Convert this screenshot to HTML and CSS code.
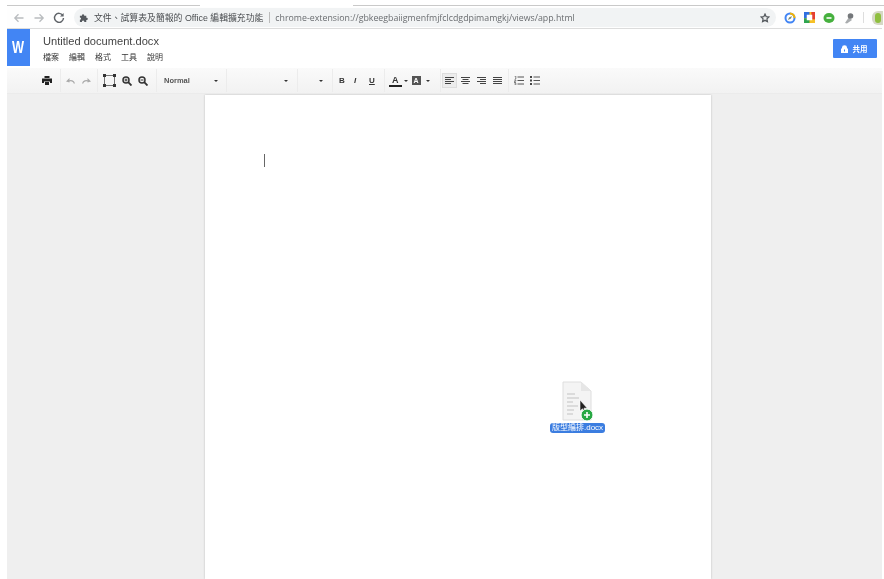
FILE: index.html
```html
<!DOCTYPE html>
<html lang="zh-Hant">
<head>
<meta charset="utf-8">
<title>Untitled document.docx</title>
<link rel="stylesheet" href="styles.css">
</head>
<body>
<div class="window">
  <div class="tabstrip"><span class="tabline tabline-a"></span><span class="tabgap"></span><span class="tabline tabline-b"></span></div>
  <div class="browserbar">
    <svg class="nav" width="12" height="12" viewBox="0 0 12 12"><path d="M10.500 6H2M5.500 2.200 1.800 6l3.700 3.800" fill="none" stroke="#b9bcbf" stroke-width="1.300"/></svg>
    <svg class="nav" width="12" height="12" viewBox="0 0 12 12"><path d="M1.500 6H10M6.500 2.200 10.200 6l-3.700 3.800" fill="none" stroke="#b9bcbf" stroke-width="1.300"/></svg>
    <svg class="nav" width="12" height="12" viewBox="0 0 12 12"><path d="M9.800 3.400A4.500 4.500 0 1 0 10.500 6" fill="none" stroke="#5f6368" stroke-width="1.400"/><path d="M10.600 1v3.600H7z" fill="#5f6368"/></svg>
    <div class="omnibox">
      <svg class="puzzle" width="10" height="10" viewBox="0 0 11 11"><path d="M1 5V3h2.200a1.300 1.300 0 1 1 2.500 0H8v2.200a1.300 1.300 0 1 1 0 2.500V10H5.800a1.300 1.300 0 1 0-2.500 0H1V7.500a1.200 1.200 0 1 0 0-2.500z" fill="#55595e"/></svg>
      <span class="ext-name">文件、試算表及簡報的 Office 編輯擴充功能</span>
      <span class="divider"></span>
      <span class="url">chrome-extension://gbkeegbaiigmenfmjfclcdgdpimamgkj/views/app.html</span>
      <svg class="star" width="10" height="10" viewBox="0 0 12 12"><path d="m6 1.300 1.400 3.100 3.300.4-2.400 2.300.6 3.300L6 8.800l-2.900 1.600.6-3.300-2.400-2.300 3.300-.4z" fill="none" stroke="#55595e" stroke-width="1.500"/></svg>
    </div>
    <div class="extensions">
      <svg width="12" height="12" viewBox="0 0 12 12"><circle cx="6" cy="6" r="4.500" fill="none" stroke="#4285f4" stroke-width="2"/><path d="M6 1.500A4.500 4.500 0 0 1 10.500 6" fill="none" stroke="#f5b400" stroke-width="2"/><path d="M8 4 5 5.500 4 8l3-1.500z" fill="#7a8a70"/></svg>
      <svg width="11" height="11" viewBox="0 0 12 12"><rect width="12" height="12" fill="#f6c026"/><rect width="6" height="7" fill="#2f6fe0"/><rect y="7" width="6" height="5" fill="#2ea44f"/><rect x="8" width="4" height="8" fill="#e53f30"/><rect x="3" y="3" width="6" height="6" fill="#fff"/></svg>
      <svg width="12" height="12" viewBox="0 0 12 12"><ellipse cx="6" cy="6" rx="5.500" ry="5" fill="#46b03e"/><rect x="3.500" y="5" width="5" height="2" fill="#d9f0d5"/></svg>
      <svg width="12" height="12" viewBox="0 0 12 12"><path d="M2 11 6 5l3 3-5 3.500z" fill="#a9acae"/><circle cx="7.500" cy="4" r="2.800" fill="#74777a"/></svg>
      <span class="ext-sep"></span>
      <span class="avatar"><span class="avatar-in"></span></span>
    </div>
  </div>
  <header class="appbar">
    <div class="logo"><span class="logo-w">W</span></div>
    <div class="titles">
      <div class="doc-title">Untitled document.docx</div>
      <nav class="menu"><span>檔案</span><span>編輯</span><span>格式</span><span>工具</span><span>說明</span></nav>
    </div>
    <button class="share"><svg width="7" height="8" viewBox="0 0 7 8"><path d="M1 3.500V2.400a2.500 2.200 0 0 1 5 0v1.100h1V8H0V3.500z" fill="#fff"/><rect x="3" y="4.500" width="1" height="2" fill="#4285f4"/></svg><span>共用</span></button>
  </header>
  <div class="toolbar">
    <div class="tgroup g-print">
      <svg width="10" height="9" viewBox="0 0 10 9"><path d="M2.500 0h5v2h-5zM0 2.500h10V7H8V5.500H2V7H0zM3 6h4v3H3z" fill="#222"/></svg>
    </div>
    <div class="tgroup g-undo">
      <svg width="9" height="6" viewBox="0 0 9 6"><path d="M8.500 5.500C7.500 2.800 5 2 2.500 3" fill="none" stroke="#aaa" stroke-width="1.200"/><path d="M0 3.500 3.500 0v4.500z" fill="#aaa"/></svg>
      <svg width="9" height="6" viewBox="0 0 9 6"><path d="M.5 5.500C1.500 2.800 4 2 6.500 3" fill="none" stroke="#aaa" stroke-width="1.200"/><path d="M9 3.500 5.500 0v4.500z" fill="#aaa"/></svg>
    </div>
    <div class="tgroup g-zoom">
      <svg width="13" height="13" viewBox="0 0 13 13"><path d="M2 1.500h9M2 11.500h9M1.500 2v9M11.500 2v9" stroke="#555" stroke-width=".8" fill="none"/><path d="M0 0h3v3H0zM10 0h3v3h-3zM0 10h3v3H0zM10 10h3v3h-3z" fill="#333"/></svg>
      <svg width="10" height="10" viewBox="0 0 10 10"><circle cx="4" cy="4" r="3" fill="none" stroke="#333" stroke-width="1.500"/><path d="m6.200 6.200 3.300 3.300" stroke="#333" stroke-width="1.800"/><path d="M2.500 4h3M4 2.500v3" stroke="#333"/></svg>
      <svg width="10" height="10" viewBox="0 0 10 10"><circle cx="4" cy="4" r="3" fill="none" stroke="#333" stroke-width="1.500"/><path d="m6.200 6.200 3.300 3.300" stroke="#333" stroke-width="1.800"/><path d="M2.500 4h3" stroke="#333"/></svg>
    </div>
    <div class="tselect s-style"><span>Normal</span><i class="caret"></i></div>
    <div class="tselect s-font"><i class="caret"></i></div>
    <div class="tselect s-size"><i class="caret"></i></div>
    <div class="tgroup g-format"><b class="f-b">B</b><i class="f-i">I</i><u class="f-u">U</u></div>
    <div class="tgroup g-color">
      <span class="color-a">A</span><i class="caret"></i>
      <span class="color-b">A</span><i class="caret"></i>
    </div>
    <div class="tgroup g-align">
      <span class="al al-on"><svg width="9" height="8" viewBox="0 0 9 8"><path d="M0 .5h9M0 2.500h6M0 4.500h9M0 6.500h6" stroke="#444"/></svg></span>
      <span class="al"><svg width="9" height="8" viewBox="0 0 9 8"><path d="M0 .5h9M1.500 2.500h6M0 4.500h9M1.500 6.500h6" stroke="#444"/></svg></span>
      <span class="al"><svg width="9" height="8" viewBox="0 0 9 8"><path d="M0 .5h9M3 2.500h6M0 4.500h9M3 6.500h6" stroke="#444"/></svg></span>
      <span class="al"><svg width="9" height="8" viewBox="0 0 9 8"><path d="M0 .5h9M0 2.500h9M0 4.500h9M0 6.500h9" stroke="#444"/></svg></span>
    </div>
    <div class="tgroup g-list">
      <svg width="10" height="9" viewBox="0 0 10 9"><path d="M3.500 1h6.500M3.500 4.500h6.500M3.500 8h6.500" stroke="#555"/><path d="M.5 0h1.300v3H1M.3 4h1.500v1.200H.3v1.300h1.600M.3 7h1.500v2H.3" stroke="#555" fill="none" stroke-width=".7"/></svg>
      <svg width="10" height="9" viewBox="0 0 10 9"><path d="M3.500 1h6.500M3.500 4.500h6.500M3.500 8h6.500" stroke="#555"/><path d="M0 0h2v2H0zM0 3.500h2v2H0zM0 7h2v2H0z" fill="#444"/></svg>
    </div>
  </div>
  <main class="workspace">
    <div class="page">
      <span class="cursor"></span>
      <div class="drag">
        <svg class="drag-file" width="40" height="46" viewBox="0 0 40 46">
          <path d="M5 3h18l10 9v29H5z" fill="#f4f4f4" stroke="#dedede"/>
          <path d="M23 3v9h10z" fill="#e6e6e6"/>
          <path d="M9 15h8M9 19h12M9 23h6M9 27h11M9 31h7M9 35h6" stroke="#c2c2c2"/>
          <path d="M22 21v11l2.500-2.200 1.800 3.700 1.500-.8-1.800-3.500h3.300z" fill="#222" stroke="#fff" stroke-width=".6"/>
          <circle cx="29" cy="36" r="6" fill="#27a844" stroke="#fff"/>
          <path d="M26 36h6M29 33v6" stroke="#fff" stroke-width="1.600"/>
        </svg>
        <span class="drag-label">版型編排.docx</span>
      </div>
    </div>
  </main>
</div>
</body>
</html>
```

FILE: styles.css
```css
* { box-sizing: border-box; }
html, body { margin: 0; height: 100%; }
body {
  background: #fff;
  overflow: hidden;
  font-family: "Liberation Sans", "Noto Sans CJK TC", sans-serif;
  color: #333;
}
.window {
  width: 875px;
  height: 579px;
  margin-left: 7px;
  display: flex;
  flex-direction: column;
  background: #fff;
}
svg { display: block; flex: none; }

.tabstrip { height: 7px; display: flex; padding-top: 5px; flex: none; }
.tabline { height: 1px; background: #c9c9c9; }
.tabline-a { width: 193px; }
.tabgap { width: 153px; }
.tabline-b { flex: 1; margin-right: -2px; }

.browserbar {
  height: 22px;
  flex: none;
  display: flex;
  align-items: center;
  border-bottom: 1px solid #dcdcdc;
  padding-left: 6px;
  gap: 7px;
  background: #fefefe;
  filter: blur(.5px);
}
.nav { flex: none; margin-right: 1px; }
.omnibox {
  margin-left: 1px;
  width: 702px;
  height: 19px;
  flex: none;
  border-radius: 10px;
  background: #f1f3f4;
  display: flex;
  align-items: center;
  padding-left: 5px;
  color: #55595e;
  font-size: 8.850px;
}
.puzzle { margin-right: 5px; }
.ext-name { white-space: nowrap; color: #4a4d50; }
.divider { width: 1px; height: 11px; background: #bbb; margin: 0 5px 0 6px; }
.url { font-family: "Open Sans", sans-serif; font-size: 8.800px; color: #6a6d70; white-space: nowrap; }
.star { margin-left: auto; margin-right: 6px; }
.extensions { display: flex; align-items: center; gap: 8px; margin-left: 1px; }
.ext-sep { width: 1px; height: 11px; background: #ddd; }
.avatar { width: 11px; height: 14px; border-radius: 6px 0 0 6px; background: #d6d8c6; display: block; padding: 2px 0 0 3px; }
.avatar-in { display: block; width: 6px; height: 10px; border-radius: 3px; background: #8fbf3f; }

.appbar { height: 39px; flex: none; display: flex; background: #fff; }
.logo {
  width: 23px;
  height: 37px;
  background: #4285f4;
  color: #fff;
  font-weight: 700;
  font-size: 17px;
  line-height: 37px;
  text-align: center;
  filter: blur(.5px);
}
.logo-w { display: inline-block; transform: scaleX(.75); }
.titles { margin-left: 13px; padding-top: 5px; filter: blur(.45px); }
.doc-title { font-size: 11.100px; line-height: 15px; color: #444; }
.menu { display: flex; gap: 10px; font-size: 8px; line-height: 11px; margin-top: 3px; color: #333; }
.share {
  margin: 10px 5px 0 auto;
  width: 44px;
  height: 19px;
  border: 0;
  border-radius: 1px;
  background: #4285f4;
  color: #fff;
  font: 700 7.500px "Noto Sans CJK TC", sans-serif;
  display: flex;
  align-items: center;
  justify-content: center;
  gap: 5px;
  padding: 0 2px 0 0;
  filter: blur(.5px);
}

.toolbar {
  height: 26px;
  flex: none;
  display: flex;
  align-items: center;
  background: linear-gradient(#fafafa, #f2f2f2);
  padding-left: 30px;
  border-bottom: 1px solid #ebebeb;
}
.tgroup { height: 23px; display: flex; align-items: center; border-right: 1px solid #ececec; filter: blur(.4px); }
.tselect { height: 23px; display: flex; align-items: center; border-right: 1px solid #ececec; font-size: 7.500px; font-weight: 700; color: #555; justify-content: space-between; filter: blur(.4px); }
.caret { display: block; width: 0; height: 0; border: 2px solid transparent; border-top: 2.500px solid #333; border-bottom: 0; flex: none; }
.g-print { width: 24px; padding-left: 5px; }
.g-undo { width: 37px; padding-left: 5px; gap: 7px; }
.g-zoom { width: 59px; padding-left: 5px; gap: 6px; }
.s-style { width: 70px; padding: 0 8px 0 7px; }
.s-font { width: 71px; justify-content: flex-end; padding-right: 9px; }
.s-size { width: 35px; justify-content: flex-end; padding-right: 9px; }
.g-format { width: 52px; padding-left: 6px; font-size: 8px; color: #333; }
.f-b { font-weight: 700; width: 15px; }
.f-i { font-style: italic; font-weight: 700; width: 15px; }
.f-u { font-weight: 700; }
.g-color { width: 56px; padding-left: 4px; gap: 2px; }
.color-a { font-size: 9px; line-height: 10px; font-weight: 700; border-bottom: 2px solid #222; padding: 0 3px; }
.color-b { margin-left: 2px; width: 9px; height: 9px; background: #555; color: #fff; font-size: 7px; line-height: 9px; text-align: center; font-weight: 700; }
.g-color .caret:last-child { margin-left: 3px; }
.g-align { width: 68px; padding-left: 1px; gap: 1px; }
.al { width: 15px; height: 15px; display: flex; align-items: center; justify-content: center; }
.al-on { background: #ececec; border: 1px solid #ddd; }
.g-list { border: 0; padding-left: 5px; gap: 6px; }

.workspace {
  flex: 1;
  min-height: 0;
  background: #efefef;
  display: flex;
  padding: 1px 0 0 198px;
  overflow: hidden;
}
.page {
  position: relative;
  width: 506px;
  background: #fff;
  box-shadow: 0 0 2px #bbb;
}
.cursor { position: absolute; left: 59px; top: 59px; width: 1px; height: 13px; background: #666; filter: blur(.3px); }
.drag { position: absolute; left: 345px; top: 284px; display: flex; flex-direction: column; align-items: center; filter: blur(.6px); }
.drag-file { margin-bottom: -2px; }
.drag-label {
  background: #3b7de0;
  color: #fff;
  font-size: 8px;
  line-height: 10px;
  padding: 0 2px;
  border-radius: 3px;
  white-space: nowrap;
}
```
